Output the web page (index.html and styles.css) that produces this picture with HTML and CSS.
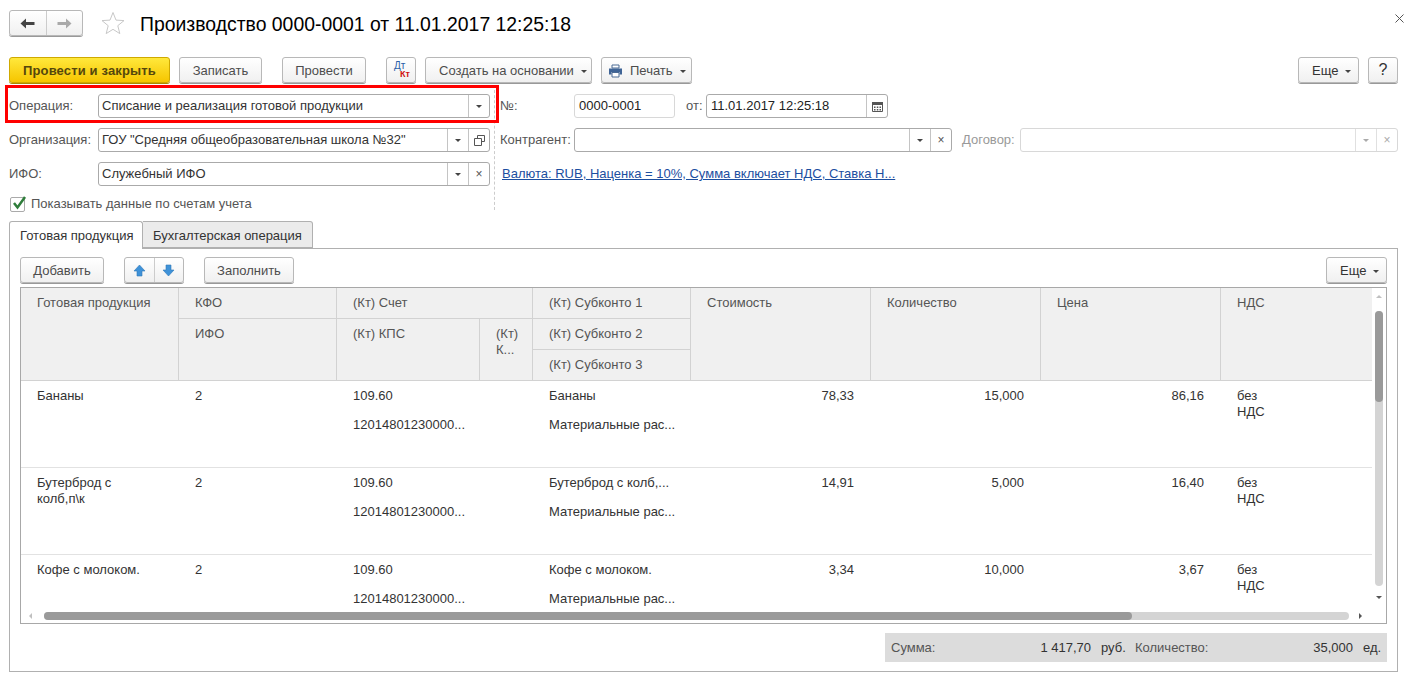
FILE: index.html
```html
<!DOCTYPE html>
<html lang="ru">

<head>
    <meta charset="UTF-8" />
    <title>Производство 0000-0001</title>
    <link rel="stylesheet" href="styles.css">
</head>

<body>
    <!-- Title -->
    <div class="head">
        <div class="nav">
            <span class="nav-part">
                <svg width="15" height="11" viewBox="0 0 15 11"><path d="M6 .5 .5 5.500 6 10.500V7h8.500V4H6z" fill="#444" /></svg>
            </span>
            <span class="nav-part">
                <svg width="15" height="11" viewBox="0 0 15 11"><path d="M9 .5l5.500 5L9 10.500V7H.5V4H9z" fill="#aaa" /></svg>
            </span>
        </div>
        <svg class="star" width="24" height="24" viewBox="0 0 24 24"><path d="M12 1.500l3 7.600 8 .5-6.200 5.100 2 7.900L12 18.300 5.200 22.600l2-7.900L1 9.600l8-.5z" fill="#fff" stroke="#c8c8c8" /></svg>
        <h1>Производство 0000-0001 от 11.01.2017 12:25:18</h1>
        <svg class="close" width="9" height="9" viewBox="0 0 9 9"><path d="M.5.500l8 8M8.500.500l-8 8" stroke="#555" /></svg>
    </div>

    <!-- Commands -->
    <div class="cmdbar">
        <button class="btn btn-primary w-post-close">Провести и закрыть</button>
        <button class="btn w-save">Записать</button>
        <button class="btn w-post">Провести</button>
        <button class="btn w-dtkt"><span class="dt">Дт</span><span class="kt">Кт</span></button>
        <button class="btn btn-drop w-create">Создать на основании <i class="caret"></i></button>
        <button class="btn btn-drop w-print">
            <svg width="15" height="14" viewBox="0 0 15 14">
                <path d="M4 1h7v3H4z" fill="#fff" stroke="#4a6a94" />
                <path d="M1 4.500h13v6h-2.500V8h-8v2.500H1z" fill="#3f6496" />
                <path d="M4 8.500h7v4.500H4z" fill="#fff" stroke="#4a6a94" />
            </svg>
            Печать <i class="caret"></i>
        </button>
        <button class="btn btn-drop w-more push-right">Еще <i class="caret"></i></button>
        <button class="btn w-help">?</button>
    </div>

    <!-- Form fields -->
    <div class="form">
        <div class="form-left">
            <div class="form-row highlighted">
                <label class="lbl lbl-left">Операция:</label>
                <div class="field grow">
                    <span class="val">Списание и реализация готовой продукции</span>
                    <span class="fbtn"><i class="caret"></i></span>
                </div>
            </div>
            <div class="form-row">
                <label class="lbl lbl-left">Организация:</label>
                <div class="field grow">
                    <span class="val">ГОУ "Средняя общеобразовательная школа №32"</span>
                    <span class="fbtn"><i class="caret"></i></span>
                    <span class="fbtn">
                        <svg width="11" height="11" viewBox="0 0 11 11"><path d="M3.500 3.500v-3h7v6h-3M.5 3.500h7v7h-7z" fill="none" stroke="#555" /></svg>
                    </span>
                </div>
            </div>
            <div class="form-row">
                <label class="lbl lbl-left">ИФО:</label>
                <div class="field grow">
                    <span class="val">Служебный ИФО</span>
                    <span class="fbtn"><i class="caret"></i></span>
                    <span class="fbtn"><span class="cross">×</span></span>
                </div>
            </div>
            <div class="check-row">
                <span class="checkbox">
                    <svg width="16" height="16" viewBox="0 0 16 16"><path d="M3 7l3.500 4.500L14 1" fill="none" stroke="#2f7d3b" stroke-width="2.500" /></svg>
                </span>
                <span class="check-text">Показывать данные по счетам учета</span>
            </div>
        </div>

        <div class="form-right">
            <div class="form-row">
                <label class="lbl lbl-right">№:</label>
                <div class="field field-off w-number"><span class="val val-dark">0000-0001</span></div>
                <label class="lbl lbl-from">от:</label>
                <div class="field w-date">
                    <span class="val val-dark">11.01.2017 12:25:18</span>
                    <span class="fbtn">
                        <svg width="11" height="11" viewBox="0 0 11 11">
                            <path d="M.5 1.500h10v9H.5z" fill="#fff" stroke="#555" />
                            <path d="M0 1h11v3H0zM2 5.500h1.500V7H2zM4.800 5.500h1.500V7H4.800zM7.500 5.500H9V7H7.500zM2 8h1.500v1.500H2zM4.800 8h1.500v1.500H4.800zM7.500 8H9v1.500H7.500z" fill="#555" />
                        </svg>
                    </span>
                </div>
            </div>
            <div class="form-row">
                <label class="lbl lbl-right">Контрагент:</label>
                <div class="field w-partner">
                    <span class="val"></span>
                    <span class="fbtn"><i class="caret"></i></span>
                    <span class="fbtn"><span class="cross">×</span></span>
                </div>
                <label class="lbl lbl-contract">Договор:</label>
                <div class="field field-off grow">
                    <span class="val"></span>
                    <span class="fbtn"><i class="caret caret-off"></i></span>
                    <span class="fbtn"><span class="cross cross-off">×</span></span>
                </div>
            </div>
            <div class="form-row">
                <a class="link" href="#">Валюта: RUB, Наценка = 10%, Сумма включает НДС, Ставка Н...</a>
            </div>
        </div>
    </div>

    <!-- Tabs -->
    <div class="tabs">
        <div class="tab active">Готовая продукция</div>
        <div class="tab">Бухгалтерская операция</div>
    </div>

    <div class="panel">
        <div class="toolbar">
            <button class="btn w-add">Добавить</button>
            <div class="updown">
                <span class="updown-part">
                    <svg width="13" height="13" viewBox="0 0 13 13"><path d="M6.500 1 12 7H9v5H4V7H1z" fill="#3f92d8" stroke="#2f78b8" stroke-width=".6" /></svg>
                </span>
                <span class="updown-part">
                    <svg width="13" height="13" viewBox="0 0 13 13"><path d="M6.500 12 12 6H9V1H4v5H1z" fill="#3f92d8" stroke="#2f78b8" stroke-width=".6" /></svg>
                </span>
            </div>
            <button class="btn w-fill">Заполнить</button>
            <button class="btn btn-drop w-more push-right">Еще <i class="caret"></i></button>
        </div>

        <div class="grid-wrap">
            <div class="grid-head">
                <div class="hc hc-prod">Готовая продукция</div>
                <div class="hc hc-kfo">КФО</div>
                <div class="hc hc-acc">(Кт) Счет</div>
                <div class="hc hc-sub1">(Кт) Субконто 1</div>
                <div class="hc hc-cost">Стоимость</div>
                <div class="hc hc-qty">Количество</div>
                <div class="hc hc-price">Цена</div>
                <div class="hc hc-vat">НДС</div>
                <div class="hc hc-ifo">ИФО</div>
                <div class="hc hc-kps">(Кт) КПС</div>
                <div class="hc hc-narrow">(Кт) К...</div>
                <div class="hc hc-sub2">(Кт) Субконто 2</div>
                <div class="hc hc-sub3">(Кт) Субконто 3</div>
            </div>

            <div class="grid-row">
                <div class="c">Бананы</div>
                <div class="c">2</div>
                <div class="c"><p>109.60</p><p>12014801230000...</p></div>
                <div class="c"><p>Бананы</p><p>Материальные рас...</p></div>
                <div class="c num">78,33</div>
                <div class="c num">15,000</div>
                <div class="c num">86,16</div>
                <div class="c c-vat">без НДС</div>
            </div>
            <div class="grid-row">
                <div class="c c-name">Бутерброд с колб,п\к</div>
                <div class="c">2</div>
                <div class="c"><p>109.60</p><p>12014801230000...</p></div>
                <div class="c"><p>Бутерброд с колб,...</p><p>Материальные рас...</p></div>
                <div class="c num">14,91</div>
                <div class="c num">5,000</div>
                <div class="c num">16,40</div>
                <div class="c c-vat">без НДС</div>
            </div>
            <div class="grid-row">
                <div class="c">Кофе с молоком.</div>
                <div class="c">2</div>
                <div class="c"><p>109.60</p><p>12014801230000...</p></div>
                <div class="c"><p>Кофе с молоком.</p><p>Материальные рас...</p></div>
                <div class="c num">3,34</div>
                <div class="c num">10,000</div>
                <div class="c num">3,67</div>
                <div class="c c-vat">без НДС</div>
            </div>

            <!-- Scrollbars -->
            <i class="arrow arrow-up"></i>
            <div class="vtrack"><div class="vthumb"></div></div>
            <i class="arrow arrow-down"></i>
            <i class="arrow arrow-left"></i>
            <div class="htrack"><div class="hthumb"></div></div>
            <i class="arrow arrow-right"></i>
        </div>

        <div class="summary">
            <div class="sum-part sum-total"><span>Сумма:</span><span class="sum-val">1 417,70</span></div>
            <span class="sum-unit">руб.</span>
            <div class="sum-part sum-qty"><span>Количество:</span><span class="sum-val">35,000</span></div>
            <span class="sum-unit">ед.</span>
        </div>
    </div>
</body>

</html>
```

FILE: styles.css
```css
* {
    box-sizing: border-box;
    margin: 0;
    padding: 0;
}

html,
body {
    width: 1410px;
    height: 680px;
    overflow: hidden;
}

body {
    background: #fff;
    color: #333;
    font-family: "Liberation Sans", Arial, sans-serif;
    font-size: 13px;
    line-height: 16px;
}

/* Title */
.head {
    display: flex;
    align-items: center;
    height: 47px;
    padding: 10px 10px 11px 9px;
}

.nav {
    display: flex;
    width: 74px;
    height: 26px;
    background: linear-gradient(#fff, #f0f0f0);
    border: 1px solid #b8b8b8;
    border-radius: 3px;
    box-shadow: 0 1px 0 #999;
}

.nav-part {
    flex: 1;
    display: flex;
    align-items: center;
    justify-content: center;
}

.nav-part + .nav-part {
    border-left: 1px solid #ccc;
}

.star {
    margin-left: 18px;
}

h1 {
    margin: 2px 0 0 15px;
    color: #000;
    font-size: 19.4px;
    font-weight: normal;
    line-height: 24px;
}

.close {
    margin-left: auto;
    margin-bottom: 9px;
    margin-right: -4px;
}

/* Buttons */
.cmdbar {
    display: flex;
    height: 26px;
    margin: 10px 12px 0 9px;
}

.btn {
    display: inline-flex;
    align-items: center;
    justify-content: center;
    gap: 7px;
    height: 26px;
    padding-top: 2px;
    background: linear-gradient(#fff, #f0f0f0);
    border: 1px solid #b8b8b8;
    border-radius: 3px;
    box-shadow: 0 1px 0 #999;
    color: #4d4d4d;
    font: inherit;
}

.btn-primary {
    background: linear-gradient(#ffe83c, #f6c500);
    border-color: #cfa900;
    box-shadow: 0 1px 0 #a88a00;
    color: #54470c;
    font-weight: bold;
    letter-spacing: .15px;
}

.btn-drop {
    justify-content: flex-start;
    padding-left: 13px;
}

.w-post-close { width: 161px; }
.w-save { width: 83px; margin-left: 9px; }
.w-post { width: 84px; margin-left: 20px; }
.w-dtkt { width: 30px; margin-left: 20px; flex-direction: column; gap: 0; align-items: flex-start; padding: 0 0 0 7px; }
.w-create { width: 167px; margin-left: 9px; }
.w-print { width: 91px; margin-left: 9px; padding-left: 6px; }
.w-more { width: 61px; color: #333; }
.w-help { width: 30px; margin-left: 9px; padding-top: 0; color: #333; font-size: 16px; }
.w-add { width: 84px; }
.w-fill { width: 90px; margin-left: 20px; }

.push-right {
    margin-left: auto;
}

.dt,
.kt {
    line-height: 8px;
}

.dt {
    color: #2a5fa8;
    font-size: 10px;
}

.kt {
    margin-left: 6px;
    color: #d01010;
    font-size: 9px;
    font-weight: bold;
}

.caret {
    display: inline-block;
    width: 0;
    height: 0;
    border-left: 3px solid transparent;
    border-right: 3px solid transparent;
    border-top: 3px solid #444;
}

.caret-off {
    border-top-color: #aaa;
}

/* Form */
.form {
    display: flex;
    height: 125px;
    margin: 2px 12px 0 9px;
}

.form-left {
    width: 481px;
    padding-top: 9px;
}

.form-right {
    flex: 1;
    margin-left: 4px;
    padding: 9px 0 0 5px;
    border-left: 1px dashed #ccc;
}

.form-row {
    display: flex;
    align-items: center;
    height: 24px;
    margin-bottom: 10px;
}

.highlighted {
    position: relative;
}

/* Red frame around the field */
.highlighted::after {
    content: "";
    position: absolute;
    top: -9px;
    left: -4px;
    box-sizing: border-box;
    width: 494px;
    height: 38px;
    border: 3px solid #f00;
}

.lbl {
    flex: none;
    color: #555;
}

.lbl-left { width: 89px; }
.lbl-right { width: 74px; }
.lbl-from { width: 20px; margin-left: 11px; }
.lbl-contract { width: 58px; margin-left: 10px; color: #999; }

.field {
    display: flex;
    height: 24px;
    background: #fff;
    border: 1px solid #aaa;
    border-radius: 3px;
}

.grow {
    flex: 1;
}

.field-off {
    border-color: #d8d8d8;
}

.w-number { width: 101px; }
.w-date { width: 182px; }
.w-partner { width: 378px; }

.val {
    flex: 1;
    padding: 3px 3px 0;
    white-space: nowrap;
}

.val-dark {
    padding-left: 4px;
    color: #222;
}

.fbtn {
    flex: none;
    display: flex;
    align-items: center;
    justify-content: center;
    width: 21px;
    border-left: 1px solid #c4c4c4;
}

.field-off .fbtn {
    border-left-color: #e0e0e0;
}

.cross {
    color: #555;
    font-size: 12px;
}

.cross-off {
    color: #aaa;
}

.link {
    margin-left: 2px;
    color: #1c4ea0;
}

.check-row {
    display: flex;
    align-items: center;
    gap: 6px;
    margin-left: 1px;
}

.checkbox {
    width: 15px;
    height: 15px;
    border: 1px solid #aaa;
    border-radius: 2px;
}

.checkbox svg {
    display: block;
    margin-top: -2px;
}

.check-text {
    color: #555;
}

/* Tabs */
.tabs {
    display: flex;
    position: relative;
    z-index: 1;
    height: 28px;
    margin: 11px 0 -1px 9px;
}

.tab {
    width: 170px;
    height: 27px;
    padding: 6px 0 0 10px;
    background: #ebebeb;
    border: 1px solid #b0b0b0;
    border-left: none;
    border-radius: 0 3px 0 0;
}

.tab.active {
    width: 134px;
    height: 28px;
    background: #fff;
    border-left: 1px solid #b0b0b0;
    border-bottom: none;
    border-radius: 3px 3px 0 0;
}

.panel {
    height: 424px;
    margin: 0 12px 0 9px;
    padding: 8px 10px 0;
    border: 1px solid #b0b0b0;
}

.toolbar {
    display: flex;
    height: 26px;
}

.updown {
    display: flex;
    width: 60px;
    height: 26px;
    margin-left: 20px;
    background: linear-gradient(#fff, #f0f0f0);
    border: 1px solid #b8b8b8;
    border-radius: 3px;
    box-shadow: 0 1px 0 #999;
}

.updown-part {
    flex: 1;
    display: flex;
    align-items: center;
    justify-content: center;
}

.updown-part + .updown-part {
    border-left: 1px solid #ccc;
}

/* Table */
.grid-wrap {
    position: relative;
    height: 337px;
    margin-top: 4px;
    border: 1px solid #a8a8a8;
    overflow: hidden;
}

.grid-head,
.grid-row {
    display: grid;
    width: 1351px;
    column-gap: 1px;
}

.grid-head {
    grid-template-columns: 157px 157px 142px 52px 157px 179px 169px 179px 151px;
    grid-template-rows: 30px 30px 30px;
    row-gap: 1px;
    background: #d2d2d2;
    border-bottom: 1px solid #d2d2d2;
}

.hc {
    padding: 7px 16px 0;
    background: #f0f0f0;
    color: #555;
}

.hc-prod { grid-column: 1; grid-row: 1 / 4; }
.hc-kfo { grid-column: 2; grid-row: 1; }
.hc-acc { grid-column: 3 / 5; grid-row: 1; }
.hc-sub1 { grid-column: 5; grid-row: 1; }
.hc-cost { grid-column: 6; grid-row: 1 / 4; }
.hc-qty { grid-column: 7; grid-row: 1 / 4; }
.hc-price { grid-column: 8; grid-row: 1 / 4; }
.hc-vat { grid-column: 9; grid-row: 1 / 4; }
.hc-ifo { grid-column: 2; grid-row: 2 / 4; }
.hc-kps { grid-column: 3; grid-row: 2 / 4; }
.hc-narrow { grid-column: 4; grid-row: 2 / 4; padding: 7px 2px 0 16px; }
.hc-sub2 { grid-column: 5; grid-row: 2; }
.hc-sub3 { grid-column: 5; grid-row: 3; }

.grid-row {
    grid-template-columns: 157px 157px 195px 157px 179px 169px 179px 151px;
    height: 87px;
    border-bottom: 1px solid #e2e2e2;
}

.c {
    padding: 7px 16px 0;
    white-space: nowrap;
}

.c p + p {
    margin-top: 13px;
}

.c-name {
    white-space: normal;
    padding-right: 40px;
}

.c-vat {
    white-space: normal;
    padding-right: 100px;
}

.num {
    text-align: right;
}

/* Scrollbars */
.vtrack {
    position: absolute;
    top: 23px;
    left: 1354px;
    width: 8px;
    height: 275px;
    background: #d4d4d4;
    border-radius: 4px;
}

.vthumb {
    height: 91px;
    background: #9a9a9a;
    border-radius: 4px;
}

.htrack {
    position: absolute;
    top: 324px;
    left: 23px;
    width: 1305px;
    height: 8px;
    background: #d4d4d4;
    border-radius: 4px;
}

.hthumb {
    width: 1088px;
    height: 8px;
    background: #9a9a9a;
    border-radius: 4px;
}

.arrow {
    position: absolute;
    width: 0;
    height: 0;
    border: 3px solid transparent;
}

.arrow-up { top: 7px; left: 1355px; border-top: none; border-bottom-color: #c0c0c0; }
.arrow-down { top: 308px; left: 1355px; border-bottom: none; border-top-color: #555; }
.arrow-left { top: 325px; left: 8px; border-left: none; border-right-color: #c0c0c0; }
.arrow-right { top: 325px; left: 1338px; border-right: none; border-left-color: #555; }

/* Totals */
.summary {
    display: flex;
    align-items: center;
    width: 502px;
    height: 29px;
    margin: 9px 0 0 auto;
    padding-left: 6px;
    background: #dcdcdc;
}

.sum-part {
    flex: none;
    display: flex;
    justify-content: space-between;
    color: #555;
}

.sum-val {
    color: #333;
}

.sum-total { width: 200px; }
.sum-qty { width: 218px; margin-left: 10px; }

.sum-unit {
    flex: none;
    width: 24px;
    margin-left: 10px;
}
```
